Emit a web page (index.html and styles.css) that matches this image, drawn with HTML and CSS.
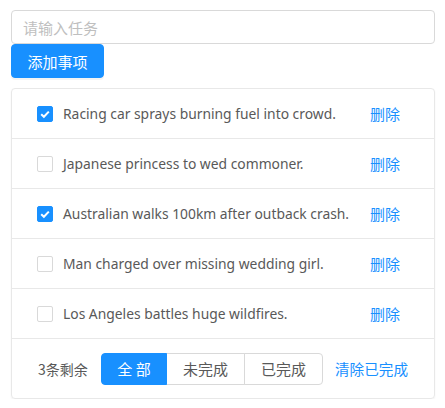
FILE: index.html
```html
<!DOCTYPE html>
<html lang="zh-CN">
<head>
<meta charset="utf-8">
<link rel="stylesheet" href="styles.css">
</head>
<body>
<div class="app">
  <input class="task-input" type="text" placeholder="请输入任务">
  <button class="add-btn" type="button">添加事项</button>
  <div class="card">
    <ul class="list">
      <li class="item">
        <span class="check checked"><svg viewBox="0 0 16 16" width="16" height="16"><path d="M4.2 8.2 L6.9 10.8 L11.8 5.6" fill="none" stroke="#fff" stroke-width="2"/></svg></span>
        <span class="text">Racing car sprays burning fuel into crowd.</span>
        <a class="del">删除</a>
      </li>
      <li class="item">
        <span class="check"></span>
        <span class="text">Japanese princess to wed commoner.</span>
        <a class="del">删除</a>
      </li>
      <li class="item">
        <span class="check checked"><svg viewBox="0 0 16 16" width="16" height="16"><path d="M4.2 8.2 L6.9 10.8 L11.8 5.6" fill="none" stroke="#fff" stroke-width="2"/></svg></span>
        <span class="text">Australian walks 100km after outback crash.</span>
        <a class="del">删除</a>
      </li>
      <li class="item">
        <span class="check"></span>
        <span class="text">Man charged over missing wedding girl.</span>
        <a class="del">删除</a>
      </li>
      <li class="item">
        <span class="check"></span>
        <span class="text">Los Angeles battles huge wildfires.</span>
        <a class="del">删除</a>
      </li>
    </ul>
    <div class="footer">
      <span class="count">3条剩余</span>
      <div class="seg">
        <button class="seg-btn active" type="button">全&nbsp;部</button>
        <button class="seg-btn" type="button">未完成</button>
        <button class="seg-btn" type="button">已完成</button>
      </div>
      <a class="clear">清除已完成</a>
    </div>
  </div>
</div>
</body>
</html>
```

FILE: styles.css
```css
* { box-sizing: border-box; }
html, body { margin: 0; padding: 0; background: #fff; }
body {
  font-family: "Noto Sans", "Noto Sans CJK SC", sans-serif;
  font-size: 14px;
  color: #595959;
}
.app {
  padding: 10px 10px 0 11px;
  display: flex;
  flex-direction: column;
  align-items: flex-start;
}
.task-input {
  width: 424px;
  height: 34px;
  margin: 0;
  padding: 0 11px;
  border: 1px solid #d9d9d9;
  border-radius: 4px;
  font-family: "Noto Sans CJK SC", sans-serif;
  font-size: 15px;
  color: #595959;
  outline: none;
}
.task-input::placeholder { color: #bfbfbf; }
.add-btn {
  height: 34px;
  width: 93px;
  margin: 0;
  padding: 0;
  border: 1px solid #1890ff;
  border-radius: 4px;
  background: #1890ff;
  color: #fff;
  font-family: "Noto Sans CJK SC", sans-serif;
  font-size: 15px;
  box-shadow: 0 2px 0 rgba(0,0,0,0.045);
}
.card {
  margin-top: 10px;
  width: 424px;
  border: 1px solid #e8e8e8;
  border-radius: 4px;
  box-shadow: 0 1px 2px rgba(0,0,0,0.06);
}
.list { list-style: none; margin: 0; padding: 0; }
.item {
  height: 50px;
  display: flex;
  align-items: center;
  padding: 0 34px 0 25px;
  border-bottom: 1px solid #e8e8e8;
}
.check {
  width: 16px;
  height: 16px;
  border: 1px solid #d9d9d9;
  border-radius: 2px;
  background: #fff;
  flex: none;
  display: flex;
}
.check.checked { background: #1890ff; border-color: #1890ff; }
.check svg { margin: -1px; }
.text {
  margin-left: 10px;
  flex: 1;
  white-space: nowrap;
  font-size: 13.85px;
}
.del {
  color: #1890ff;
  font-family: "Noto Sans CJK SC", sans-serif;
  font-size: 15px;
}
.footer {
  height: 59px;
  display: flex;
  align-items: center;
  padding-left: 26px;
}
.count {
  font-family: "Noto Sans CJK SC", sans-serif;
  font-size: 14px;
  width: 63px;
}
.seg { display: flex; }
.seg-btn {
  height: 32px;
  margin: 0 0 0 -1px;
  padding: 0;
  width: 79px;
  border: 1px solid #d9d9d9;
  background: #fff;
  color: #595959;
  font-family: "Noto Sans CJK SC", sans-serif;
  font-size: 15px;
}
.seg-btn:first-child { margin-left: 0; border-radius: 4px 0 0 4px; width: 66px; }
.seg-btn:last-child { border-radius: 0 4px 4px 0; }
.seg-btn.active { background: #1890ff; border-color: #1890ff; color: #fff; position: relative; z-index: 1; }
.clear {
  margin-left: 12px;
  color: #1890ff;
  font-family: "Noto Sans CJK SC", sans-serif;
  font-size: 14.6px;
}
```
